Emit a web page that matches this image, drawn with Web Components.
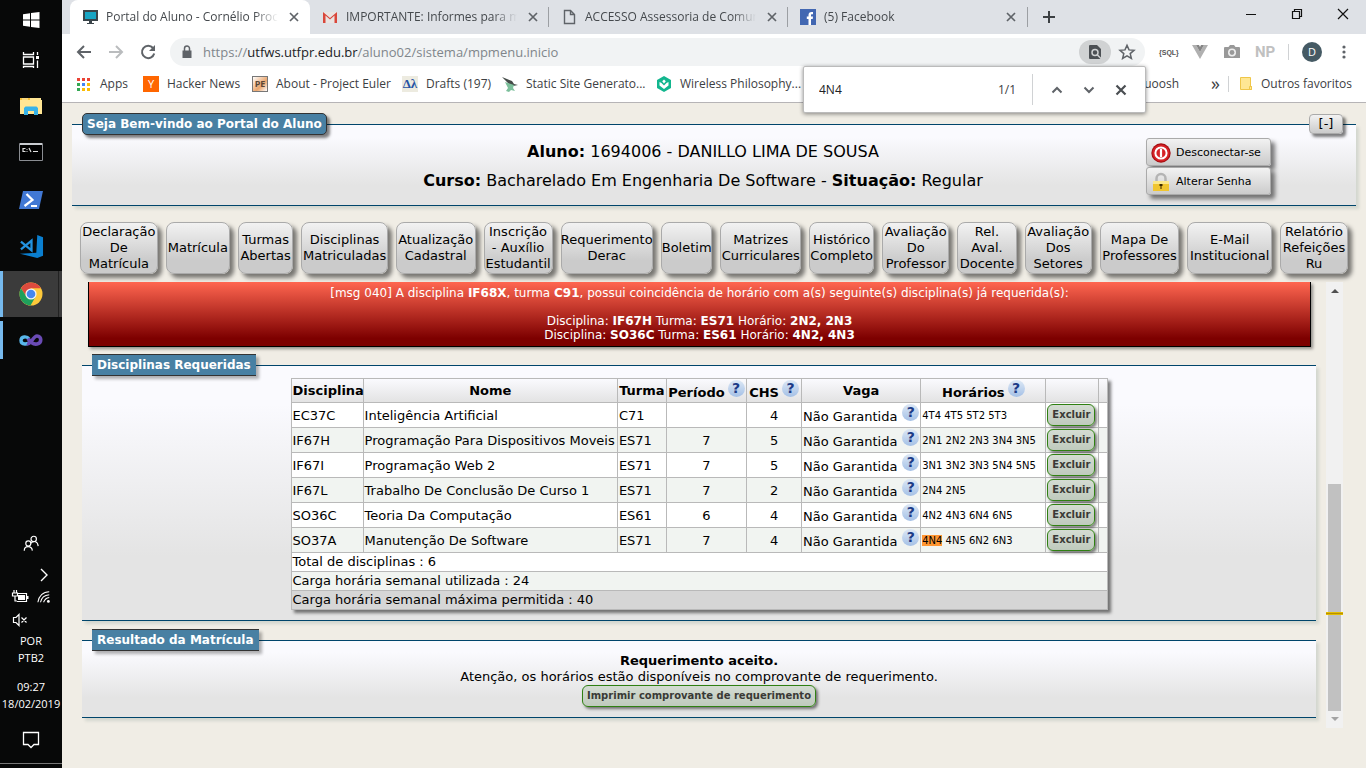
<!DOCTYPE html>
<html lang="pt-BR">
<head>
<meta charset="utf-8">
<title>Portal do Aluno - Cornélio Procópio</title>
<style>
html,body{margin:0;height:100%}
body{font-family:"Open Sans","Noto Sans",sans-serif;font-size:12px;overflow:hidden}
</style>
</head>
<body>
<desktop-shell></desktop-shell>
<script>
const define = (name, css, html, setup) => {
  const tpl = document.createElement('template');
  tpl.innerHTML = `<style>*{box-sizing:border-box}button{font:inherit;color:inherit;cursor:pointer}svg{display:block}${css}</style>${html}`;
  customElements.define(name, class extends HTMLElement {
    constructor() {
      super();
      this.attachShadow({mode: 'open'}).append(tpl.content.cloneNode(true));
    }
    connectedCallback() { if (setup) setup(this, this.shadowRoot); }
  });
};

/* ---------- Icons ---------- */
const ICONS = {
  windows: ['24', '<path fill="#fff" d="M4 6.300l7-1v6.200H4zM12 5.100l8.500-1.200v7.600H12zM4 12.500h7v6.200l-7-1zM12 12.500h8.500v7.600L12 18.900z"/>'],
  taskview: ['24', '<path fill="none" stroke="#fff" stroke-width="1.300" d="M4.500 4v2.500h10V4M4.500 9h10v7h-10zM4.500 20v-1.500h10V20M18.500 4v3M18.500 12.500V20"/><path fill="#fff" d="M17 8h3v3h-3z"/>'],
  folder: ['24', '<path fill="#f5c03a" d="M1 4h10v4H1z"/><path fill="#ffe694" d="M1 6h22v14H1z"/><path fill="#ffe694" d="M11 4h11v3H11z"/><path fill="#fff3c0" d="M3 4.500h6v1H3z"/><path fill="#36b2e8" d="M5 21v-7l1.500-1.500h11L19 14v7h-4v-4H9v4z"/>'],
  cmd: ['24', '<path fill="#000" stroke="#8a8d92" d="M.5 3.500h23v17H.5z"/><path fill="#c9ccd0" d="M1 3h22v2H1z"/><path fill="none" stroke="#ddd" stroke-width="1.200" d="M6.500 8.500H4v3h2.500M8 9v.8M8 11v.8M10 8l2 4M14 11.500h5"/>'],
  powershell: ['24', '<path fill="#4178d4" d="M4 3h20l-4 18H0z"/><path fill="none" stroke="#fff" stroke-width="2.200" d="M7.500 6l6 6-8 6M12 18h6"/>'],
  vscode: ['26', '<path fill="#0a7fd0" d="M19 1l6 2.500v19L19 25 1 20.500l17-1z"/><path fill="none" stroke="#2392df" stroke-width="2.400" d="M2 8l11 9V7L2 16"/>'],
  chrome: ['24', '<circle cx="12" cy="12" r="11.500" fill="#fdc93a"/><path fill="#dd4b3e" d="M2 6.200A11.500 11.500 0 0 1 22 6.300H12L7 14z"/><path fill="#1fa05c" d="M2 6.200A11.500 11.500 0 0 0 11.500 23.500l5-8.700L12 17l-5-3z"/><circle cx="12" cy="12" r="5.600" fill="#f4f4f4"/><circle cx="12" cy="12" r="4.300" fill="#4587ee"/>'],
  vs: ['24', '<path fill="none" stroke="#58b6ea" stroke-width="3.400" d="M12 13C9 17 2 17 2 12.500S8 8 10 11"/><path fill="none" stroke="#6a4bb5" stroke-width="3.600" d="M9 10.500c3 5 6 6 9 5.500 5-1 5-8 0-8-4 0-6 9-10 7.500"/>'],
  people: ['20', '<g fill="none" stroke="#fff" stroke-width="1.300"><circle cx="13" cy="5.500" r="3"/><path d="M9.500 10.500c4-4 8-2 8.500 3"/><circle cx="7" cy="10.500" r="2.800"/><path d="M2.500 18.500c0-6 8.500-6 9 0"/></g>'],
  chevron: ['14', '<path fill="none" stroke="#fff" stroke-width="1.400" d="M4 1l6 6-6 6"/>'],
  battery: ['18', '<path fill="none" stroke="#fff" stroke-width="1.200" d="M6 5.500h9.500v8H6M3 2v3M5.500 2v3M1.500 5h5v3h-5zM4 8v5h2"/><path fill="#fff" d="M7 7h7v5H7zM16 8h1.500v3H16z"/>'],
  wifi: ['16', '<g fill="none" stroke="#fff" stroke-width="1.200"><path d="M1 14C2 7 7 2 14 2M4 14c1-5 5-8 10-8.500M7.500 14c1-3 3-5 6.500-5.500"/></g><circle cx="13" cy="13" r="1.600" fill="#fff"/>'],
  mute: ['16', '<path fill="none" stroke="#fff" stroke-width="1.200" d="M1.500 5.500H4l3-3v11l-3-3H1.500zM9.500 5.500l5 5M14.500 5.500l-5 5"/>'],
  notes: ['20', '<path fill="none" stroke="#fff" stroke-width="1.300" d="M2.500 3.500h15v12H13l-3 3-3-3H2.500z"/>'],
  monitor: ['16', '<path fill="#3a4449" d="M1 1h15v11H1z"/><path fill="#18a5c4" d="M3 3h11v7H3z"/><path fill="#3a4449" d="M7 12h3v2h2v1H5v-1h2z"/>'],
  gmail: ['16', '<path fill="#e9e4e2" d="M1 3h14v11H1z"/><path fill="#d9463a" d="M1 3l7 6 7-6v11h-2.500V6.500L8 10.500 3.500 6.500V14H1z"/>'],
  page: ['16', '<path fill="none" stroke="#5f6368" stroke-width="1.400" d="M3.500 1.500h6l4 4v9h-10zM9.500 1.500v4h4"/>'],
  facebook: ['16', '<path fill="#4267b2" d="M0 0h16v16H0z"/><path fill="#fff" d="M8.500 16v-6H6.800V7.600h1.700V6c0-2 1.200-3 3-3H13v2.200h-1c-.8 0-1 .4-1 1v1.400h2L12.700 10H11v6z"/>'],
  x: ['16', '<path stroke="#5f6368" stroke-width="1.700" d="M4 4l8 8M12 4l-8 8"/>'],
  plus: ['16', '<path stroke="#3c4043" stroke-width="2" d="M8 2v12M2 8h12"/>'],
  min: ['16', '<path stroke="#111" d="M3 8.500h10"/>'],
  restore: ['16', '<path fill="none" stroke="#111" stroke-width="1.200" d="M3.500 5.500h7v7h-7zM5.500 5V3.500h7v7H11"/>'],
  winx: ['16', '<path stroke="#111" stroke-width="1.200" d="M3 3l10 10M13 3L3 13"/>'],
  back: ['18', '<path fill="none" stroke="#5f6368" stroke-width="2" d="M16 9H3M9 3L3 9l6 6"/>'],
  forward: ['18', '<path fill="none" stroke="#babcbe" stroke-width="2" d="M2 9h13M9 3l6 6-6 6"/>'],
  reload: ['18', '<path fill="none" stroke="#5f6368" stroke-width="2" d="M14 5a6.200 6.200 0 1 0 1.200 5.500"/><path fill="#5f6368" d="M16 2v6h-6z"/>'],
  lock: ['16', '<path fill="#5f6368" d="M3.500 6.500h9v7.500h-9z"/><path fill="none" stroke="#5f6368" stroke-width="1.500" d="M5.500 7V4.500a2.500 2.500 0 0 1 5 0V7"/>'],
  findpage: ['18', '<path fill="#4c5054" d="M4 2h7l4 4v10H4a1 1 0 0 1-1-1V3a1 1 0 0 1 1-1z"/><circle cx="9" cy="9.500" r="3" fill="none" stroke="#d0d2d3" stroke-width="1.500"/><path stroke="#d0d2d3" stroke-width="1.500" d="M11 11.500l4.500 4.500"/>'],
  star: ['18', '<path fill="none" stroke="#5f6368" stroke-width="1.500" d="M9 2.300l2 4.600 5 .4-3.800 3.300 1.200 4.900L9 12.900l-4.400 2.600 1.200-4.900L2 7.300l5-.4z"/>'],
  vue: ['18', '<path fill="#b0b0b0" d="M1 2h4l4 7 4-7h4L9 16z"/><path fill="#858585" d="M5 2h3l1 2 1-2h3L9 9z"/>'],
  camera: ['18', '<path fill="#999" d="M5.500 4L7 2h4l1.500 2H16a1 1 0 0 1 1 1v10H1V5a1 1 0 0 1 1-1z"/><circle cx="9" cy="9.500" r="4" fill="#eee"/><circle cx="9" cy="9.500" r="2.400" fill="#999"/>'],
  dots: ['16', '<g fill="#5f6368"><circle cx="8" cy="3" r="1.600"/><circle cx="8" cy="8" r="1.600"/><circle cx="8" cy="13" r="1.600"/></g>'],
  apps: ['16', '<path fill="#ea4335" d="M1 2h3v3H1zM6 2h3v3H6zM11 2h3v3h-3z"/><path fill="#34a853" d="M1 7h3v3H1zM1 12h3v3H1z"/><path fill="#4285f4" d="M6 7h3v3H6z"/><path fill="#fbbc05" d="M11 7h3v3h-3zM6 12h3v3H6zM11 12h3v3h-3z"/>'],
  hummingbird: ['16', '<path fill="#444b48" d="M0 1l10 4 2 3 4 1-5 1-4-2z"/><path fill="#7cbf9b" d="M3 6l9 3-1 3 2 3-4-1-2 2-3-1 2-3z"/>'],
  hexagon: ['16', '<path fill="#12b68e" d="M8 0l7 4v8l-7 4-7-4V4z"/><path fill="#fff" d="M3.500 6l2 1L8 9.500 10.500 7l2-1v3.500L8 13 3.500 9.500zM8 3.500l1.800 1.800L8 7.500 6.200 5.300z"/>'],
  bfolder: ['14', '<path fill="#ffe793" stroke="#efc648" d="M1.500.500h10v9h1v3h-11z"/><path fill="#ffe793" stroke="#efc648" d="M10.500 9.500h2v3h-2z"/>'],
  up: ['16', '<path fill="none" stroke="#5f6368" stroke-width="2" d="M3.500 10.500L8 6l4.500 4.500"/>'],
  down: ['16', '<path fill="none" stroke="#5f6368" stroke-width="2" d="M3.500 5.500L8 10l4.500-4.500"/>'],
  bigx: ['16', '<path stroke="#4a4e52" stroke-width="2.200" d="M3.500 3.500l9 9M12.500 3.500l-9 9"/>'],
  power: ['20', '<circle cx="10" cy="10" r="9.700" fill="#a50e12"/><circle cx="10" cy="10" r="8.600" fill="#d62226"/><circle cx="10" cy="10" r="5.600" fill="none" stroke="#fff" stroke-width="2"/><path stroke="#fff" stroke-width="2.200" d="M10 6v8"/>'],
  padlock: ['20', '<path fill="none" stroke="#b4b4b4" stroke-width="2.500" d="M5.500 10V6.500a4.500 4.500 0 0 1 9 0V10"/><path fill="#f0c52e" d="M2 9h16v10H2z"/><path fill="#fbe88a" d="M2 9h16v3H2z"/><path fill="#3b2b00" d="M8.500 12h3v2h-1v3h-1v-3h-1z"/>']
};
define('ui-icon', ':host{display:block;flex:none}', '', (el, root) => {
  const [box, art] = ICONS[el.getAttribute('name')];
  const size = el.getAttribute('size') || box;
  root.innerHTML += `<svg width="${size}" height="${size}" viewBox="0 0 ${box} ${box}" aria-hidden="true">${art}</svg>`;
});

/* ---------- Windows taskbar ---------- */
define('task-bar', `
:host{display:flex;flex-direction:column;align-items:center;background:#070808;color:#fff;font-size:11px;line-height:17px;text-align:center;border-bottom:4px solid #070808}
button{width:100%;height:46px;display:flex;align-items:center;justify-content:center;background:none;border:0;padding:0}
.s{height:40px}.gap{margin-top:3px}.gap2{margin-top:2px}
.on{background:linear-gradient(90deg,#76b9ed 3px,#3b3b3b 3px 58px,#222 58px 59px,#3b3b3b 59px)}
.run{border-left:3px solid #76b9ed;padding-right:3px;height:38px;margin-top:4px}
.grow{flex:1}
.tray{display:grid;grid-template-columns:auto auto;gap:6px 8px;justify-items:center;align-items:center;margin-bottom:4px}
.tray ui-icon:nth-child(1){grid-column:1/3;margin-bottom:10px}
.tray ui-icon:nth-child(2){grid-column:2}
.clock{margin-top:12px}
.notes{height:46px;margin:4px 0 1px}
.line{width:100%;height:1px;background:#777}`,
`<button class="s" aria-label="Iniciar"><ui-icon name="windows"></ui-icon></button>
<button class="s" aria-label="Visão de tarefas"><ui-icon name="taskview"></ui-icon></button>
<button class="gap" aria-label="Explorador"><ui-icon name="folder"></ui-icon></button>
<button aria-label="Prompt"><ui-icon name="cmd"></ui-icon></button>
<button class="gap2" aria-label="PowerShell"><ui-icon name="powershell"></ui-icon></button>
<button aria-label="Code"><ui-icon name="vscode" size="25"></ui-icon></button>
<button class="on gap2" aria-label="Chrome"><ui-icon name="chrome"></ui-icon></button>
<button class="run" aria-label="Visual Studio"><ui-icon name="vs"></ui-icon></button>
<div class="grow"></div>
<div class="tray"><ui-icon name="people" size="18"></ui-icon><ui-icon name="chevron"></ui-icon><ui-icon name="battery"></ui-icon><ui-icon name="wifi" size="14"></ui-icon><ui-icon name="mute"></ui-icon></div>
<div>POR<br>PTB2</div><div class="clock">09:27<br>18/02/2019</div>
<button class="notes" aria-label="Notificações"><ui-icon name="notes"></ui-icon></button><div class="line"></div>`);

/* ---------- Browser chrome ---------- */
define('browser-tab', `
:host{display:flex;align-items:center;gap:8px;width:239px;height:34px;padding:0 8px 0 12px;color:#45494d;line-height:18px;position:relative}
:host([active]){width:240px;background:#fff;border-radius:8px 8px 0 0}
:host(:not([active]):not([first]))::before{content:"";position:absolute;left:-1px;top:7px;height:20px;width:1px;background:#9c9fa3}
.t{flex:1;overflow:hidden;white-space:nowrap;-webkit-mask:linear-gradient(90deg,#000 calc(100% - 24px),transparent)}
button{border:0;background:none;padding:0}`,
`<slot name="icon"></slot><span class="t"><slot></slot></span><button aria-label="Fechar guia"><ui-icon name="x"></ui-icon></button>`);

define('tab-strip', `
:host{display:flex;background:#dee1e6;height:34px;padding-left:8px;align-items:center}
.new{border:0;border-left:1px solid #9c9fa3;background:none;height:20px;padding:0 14px 0 13px;display:flex;align-items:center}
.g{flex:1}.w{border:0;background:none;padding:0;width:46px;height:28px;display:grid;place-items:center;align-self:start}`,
`<browser-tab active><ui-icon slot="icon" name="monitor"></ui-icon>Portal do Aluno - Cornélio Procópio</browser-tab>
<browser-tab first><ui-icon slot="icon" name="gmail"></ui-icon>IMPORTANTE: Informes para matrícula</browser-tab>
<browser-tab><ui-icon slot="icon" name="page"></ui-icon>ACCESSO Assessoria de Comunicação</browser-tab>
<browser-tab><ui-icon slot="icon" name="facebook"></ui-icon>(5) Facebook</browser-tab>
<button class="new" aria-label="Nova guia"><ui-icon name="plus"></ui-icon></button><span class="g"></span>
<button class="w" aria-label="Minimizar"><ui-icon name="min"></ui-icon></button><button class="w" aria-label="Restaurar"><ui-icon name="restore"></ui-icon></button><button class="w" aria-label="Fechar"><ui-icon name="winx"></ui-icon></button>`);

define('tool-bar', `
:host{display:flex;align-items:center;height:36px;background:#fff;padding:0 14px 0 13px}
button{border:0;background:none;padding:0;display:grid;place-items:center}
.n{width:18px;margin-right:14px}
.omni{flex:1;display:flex;align-items:center;height:28px;border-radius:14px;background:#f1f3f4;padding:0 9px 0 9px;margin-left:-1px}
.url{flex:1;margin-left:8px;font-size:13px;line-height:20px;color:#80868b}.url b{font-weight:400;color:#202124}
.chip{width:32px;height:24px;border-radius:12px;background:#d0d2d3;margin-right:7px}
.ext{display:flex;align-items:center;margin-left:14px;gap:14px}
.ext button{width:18px;height:18px}
.sql{font:700 7px "Liberation Sans",sans-serif;color:#555}.np{font:700 15px "Roboto",sans-serif;color:#c0c0c0}
.sep{width:1px;height:16px;background:#d0d2d4;margin:0 0 0 1px}
.ava{width:20px;height:20px;border-radius:50%;background:#455a64;color:#fff;font-size:11px;line-height:20px;margin:0 14px 0 13px}`,
`<button class="n" aria-label="Voltar"><ui-icon name="back"></ui-icon></button><button class="n" aria-label="Avançar"><ui-icon name="forward"></ui-icon></button><button class="n" aria-label="Recarregar"><ui-icon name="reload"></ui-icon></button>
<div class="omni"><ui-icon name="lock"></ui-icon><span class="url">https://<b>utfws.utfpr.edu.br</b>/aluno02/sistema/mpmenu.inicio</span><button class="chip" aria-label="Localizar"><ui-icon name="findpage"></ui-icon></button><button aria-label="Favorito"><ui-icon name="star"></ui-icon></button></div>
<div class="ext"><button class="sql">{SQL}</button><button aria-label="Vue"><ui-icon name="vue"></ui-icon></button><button aria-label="Câmera"><ui-icon name="camera"></ui-icon></button><button class="np">NP</button><span class="sep"></span></div>
<button class="ava">D</button><button aria-label="Menu"><ui-icon name="dots"></ui-icon></button>`);

define('book-mark', `
:host{display:block}a{display:flex;align-items:center;gap:8px;color:#3c4043;text-decoration:none;white-space:nowrap;line-height:18px}`,
`<a href="#"><slot name="icon"></slot><slot></slot></a>`);

define('bookmarks-bar', `
:host{display:flex;align-items:center;height:33px;background:#fff;border-bottom:1px solid #b6b4b6;padding:0 14px;color:#3c4043;position:relative;padding-bottom:4px}
.row{display:grid;grid-template-columns:67px 109px 150px 100px 154px auto}
.g{flex:1}.more{border:0;background:none;padding:0;font-size:18px;line-height:20px;margin:0 8px 3px 32px}
.sep{width:1px;height:16px;background:#d0d2d4;margin-right:10px}
.fav{width:16px;height:16px;display:grid;place-items:center;font-size:10px;line-height:14px;color:#fff}
.y{background:#f60;font-size:11px}.pe{border:1px solid #777;background:linear-gradient(135deg,#fff,#eaa56c 60%,#fff);color:#5b4636;font-weight:700;font-size:9px}
.dl{background:#edebe0;color:#2553a5;font:600 13px "Liberation Serif",serif}`,
`<div class="row"><book-mark><ui-icon slot="icon" name="apps"></ui-icon>Apps</book-mark>
<book-mark><span slot="icon" class="fav y">Y</span>Hacker News</book-mark>
<book-mark><span slot="icon" class="fav pe">PE</span>About - Project Euler</book-mark>
<book-mark><span slot="icon" class="fav dl">Δλ</span>Drafts (197)</book-mark>
<book-mark><ui-icon slot="icon" name="hummingbird"></ui-icon>Static Site Generato...</book-mark>
<book-mark><ui-icon slot="icon" name="hexagon"></ui-icon>Wireless Philosophy...</book-mark></div>
<span class="g"></span><book-mark>Squoosh</book-mark><button class="more">»</button><span class="sep"></span><book-mark><ui-icon slot="icon" name="bfolder"></ui-icon>Outros favoritos</book-mark>`);

define('find-bar', `
:host{position:absolute;right:220px;top:66px;width:343px;height:47px;display:flex;align-items:center;background:#fff;border:1px solid #bbb;border-radius:2px;box-shadow:0 1px 4px rgba(0,0,0,.45);padding:0 16px 0 15px;color:#3c4043;z-index:3}
input{flex:1;min-width:0;border:0;padding:0;font:inherit;color:#202124;outline:0}
.n{margin-right:16px}.sep{width:1px;height:31px;background:#d0d2d4;margin-right:16px}
button{border:0;background:none;padding:0;margin-left:16px}.sep + button{margin-left:0}`,
`<input aria-label="Localizar na página" value="4N4"><span class="n">1/1</span><span class="sep"></span><button aria-label="Anterior"><ui-icon name="up"></ui-icon></button><button aria-label="Próxima"><ui-icon name="down"></ui-icon></button><button aria-label="Fechar"><ui-icon name="bigx"></ui-icon></button>`);

/* ---------- Portal ---------- */
define('portal-panel', `
:host{display:block;position:relative;border:solid #00456b;border-width:1px 0;background:linear-gradient(#fafafe 15%,#e4e4e4 75%);box-shadow:3px 3px 3px rgba(0,60,50,.12)}
.leg{position:absolute;left:10px;top:-12px;height:22px;padding:0 5px;line-height:20px;font-weight:700;font-size:12px;color:#fff;background:#4880a3;border:solid #333;border-width:1px 0;box-shadow:3px 3px 3px rgba(0,0,0,.3);margin:0;white-space:nowrap}
:host([round]) .leg{border-width:1px;border-radius:5px;padding:0 4px;box-shadow:3px 3px 3px rgba(0,0,0,.5)}`,
`<h2 class="leg"><slot name="legend"></slot></h2><slot></slot>`);

define('portal-menu', `
:host{display:flex;gap:8px;height:52px}
button{flex:1 1 0;min-width:0;padding:0;font-size:13px;line-height:16px;color:#000;white-space:nowrap;display:flex;align-items:center;justify-content:center;text-align:center;border:1px solid #aaa;border-radius:8px;background:linear-gradient(#f2f2f2,#cbcbcb 75%);box-shadow:4px 4px 4px rgba(0,0,0,.5)}`,
'', (el, root) => {
  const items = [['Declaração|De|Matrícula',78],['Matrícula',64],['Turmas|Abertas',55],['Disciplinas|Matriculadas',87],['Atualização|Cadastral',80],['Inscrição|- Auxílio|Estudantil',69],['Requerimento|Derac',93],['Boletim',51],['Matrizes|Curriculares',81],['Histórico|Completo',65],['Avaliação|Do|Professor',67],['Rel.|Aval.|Docente',59],['Avaliação|Dos|Setores',67],['Mapa De|Professores',80],['E-Mail|Institucional',85],['Relatório|Refeições|Ru',68]];
  for (const [label, share] of items) {
    const b = document.createElement('button');
    b.style.flexGrow = share;
    b.innerHTML = `<span>${label.replaceAll('|', '<br>')}</span>`;
    root.append(b);
  }
});

define('student-header', `
:host{display:block}
portal-panel{height:82px}
.who{padding-top:12px;text-align:center;font-size:16px;line-height:29px;color:#000;margin-right:22px}
.act{position:absolute;right:85px;top:13px;display:grid;gap:1px}
.act button{width:125px;height:28px;display:flex;align-items:center;gap:5px;padding:1px 4px 0;font-size:11px;text-align:left;white-space:nowrap;border:1px solid #aaa;border-radius:3px;background:linear-gradient(#f2f2f2,#cbcbcb);box-shadow:4px 4px 4px rgba(0,0,0,.5)}
.min{position:absolute;right:13px;top:-11px;width:34px;height:20px;padding:0;font-size:13px;line-height:16px;border:1px solid #aaa;border-radius:4px;background:linear-gradient(#f2f2f2,#cbcbcb);box-shadow:3px 3px 3px rgba(0,0,0,.5)}`,
`<portal-panel round><span slot="legend">Seja Bem-vindo ao Portal do Aluno</span>
<div class="who"><b>Aluno:</b> 1694006 - DANILLO LIMA DE SOUSA<br><b>Curso:</b> Bacharelado Em Engenharia De Software - <b>Situação:</b> Regular</div>
<div class="act"><button><ui-icon name="power"></ui-icon>Desconectar-se</button><button><ui-icon name="padlock"></ui-icon>Alterar Senha</button></div>
<button class="min">[-]</button></portal-panel>`);

define('alert-box', `
:host{display:block;background:linear-gradient(#ff6650,#7d0000 88%);border:1px solid #000;border-top:0;box-shadow:2px 2px 3px rgba(0,0,0,.4);color:#fff;text-align:center;font-size:12px;line-height:14px;padding:4px 0 4px}
p{margin:0 0 14px}`,
`<p>[msg 040] A disciplina <b>IF68X</b>, turma <b>C91</b>, possui coincidência de horário com a(s) seguinte(s) disciplina(s) já requerida(s):</p>
Disciplina: <b>IF67H</b> Turma: <b>ES71</b> Horário: <b>2N2, 2N3</b><br>Disciplina: <b>SO36C</b> Turma: <b>ES61</b> Horário: <b>4N2, 4N3</b>`);

define('help-dot', `
:host{display:inline-block;width:17px;height:17px;border-radius:50%;background:linear-gradient(#dde8f5,#a4c0e6);color:#1c3a86;font-weight:700;font-size:14px;line-height:17px;text-align:center;vertical-align:1px}`, `?`);

define('green-button', `
:host{display:inline-block}
button{display:block;height:22px;padding:0 4px;font-weight:700;font-size:10px;line-height:18px;color:#3a3a36;border:1px solid #2f8012;border-radius:6px;background:linear-gradient(#d4dcd2,#bfcabd);box-shadow:2px 2px 3px rgba(0,0,0,.5);white-space:nowrap}`,
`<button><slot></slot></button>`);

define('course-table', `
:host{display:block;padding-top:12px}
table{margin:0 auto;width:817px;table-layout:fixed;border-collapse:collapse;font-size:13px;line-height:16px;color:#000;box-shadow:3px 3px 3px rgba(0,0,0,.5);background:#fff}
td,th{border:1px solid #b9b9b9;padding:0 1px;white-space:nowrap}
tbody tr{height:25px}thead tr{height:24px}tfoot tr{height:19px}
tbody td{padding:1px 1px 0 1px}
thead{background:linear-gradient(#fafafe,#e2e2e2)}
tbody tr:nth-child(even),tfoot tr:nth-child(2){background:#f1f4f1}
tfoot tr:nth-child(3){background:#d6d6d6}
.c{text-align:center}tbody .h{font-size:10px}
tbody .b{padding-top:0}
tbody .v{padding-top:0;line-height:20px}
.v help-dot,.q help-dot{vertical-align:0}
.v span,.q span{display:inline-flex;gap:5px;align-items:flex-end;line-height:16px}
.q span{gap:3px}
.v help-dot,.q help-dot{margin-bottom:4px}
.v span,.q span{height:21px}
mark{background:#ff9632;color:#000}`,
`<table><colgroup><col style="width:72px"><col style="width:254px"><col style="width:49px"><col style="width:80px"><col style="width:55px"><col style="width:119px"><col style="width:125px"><col style="width:53px"><col style="width:8px"></colgroup>
<thead><tr><th>Disciplina<th>Nome<th>Turma<th class="q"><span>Período <help-dot></help-dot></span><th class="q"><span>CHS <help-dot></help-dot></span><th>Vaga<th class="q"><span>Horários <help-dot></help-dot></span><th><th></tr></thead><tbody></tbody>
<tfoot><tr><td colspan="9">Total de disciplinas : 6</tr><tr><td colspan="9">Carga horária semanal utilizada : 24</tr><tr><td colspan="9">Carga horária semanal máxima permitida : 40</tr></tfoot></table>`,
(el, root) => {
  const rows = [['EC37C','Inteligência Artificial','C71','','4','4T4 4T5 5T2 5T3'],['IF67H','Programação Para Dispositivos Moveis','ES71','7','5','2N1 2N2 2N3 3N4 3N5'],['IF67I','Programação Web 2','ES71','7','5','3N1 3N2 3N3 5N4 5N5'],['IF67L','Trabalho De Conclusão De Curso 1','ES71','7','2','2N4 2N5'],['SO36C','Teoria Da Computação','ES61','6','4','4N2 4N3 6N4 6N5'],['SO37A','Manutenção De Software','ES71','7','4','<mark>4N4</mark> 4N5 6N2 6N3']];
  root.querySelector('tbody').innerHTML = rows.map(r => `<tr><td>${r[0]}<td>${r[1]}<td>${r[2]}<td class="c">${r[3]}<td class="c">${r[4]}<td class="v"><span>Não Garantida <help-dot></help-dot></span><td class="h">${r[5]}<td class="b"><green-button>Excluir</green-button><td></tr>`).join('');
});

define('scroll-track', `
:host{display:flex;flex-direction:column;width:17px;background:#f1f1f1;position:relative;align-items:center}
i{width:0;height:0;border:4px solid transparent;margin:4px 0 6px;border-top-width:3px}
.u{border-bottom:4px solid #505050}.d{border-top:4px solid #a3a3a3;border-bottom-width:3px;margin:6px 0 4px}
.s{flex:185}.t{flex:227;width:13px;background:#c1c1c1}
.m{position:absolute;left:0;right:0;top:74%;height:3px;background:#b89000;border:solid #e3bd00;border-width:1px 0}`,
`<i class="u"></i><span class="s"></span><span class="t"></span><i class="d"></i><span class="m"></span>`);

define('portal-page', `
:host{display:flex;flex-direction:column;background:#f0ede5;padding:21px 10px 40px;font-family:"DejaVu Sans",Verdana,sans-serif;min-height:0}
portal-menu{margin:16px 8px 0}
.area{flex:1;min-height:0;display:flex;gap:10px;margin:8px 13px 0 10px}
.body{flex:1;overflow:hidden;padding-right:8px;margin-right:-8px}
alert-box{margin:0 5px 0 6px}
.req{margin-top:18px;height:256px}
.res{margin-top:19px;height:78px;text-align:center;font-size:13px;line-height:16px;padding-top:12px;box-sizing:border-box}`,
`<student-header></student-header><portal-menu></portal-menu>
<div class="area"><div class="body"><alert-box></alert-box>
<portal-panel class="req"><span slot="legend">Disciplinas Requeridas</span><course-table></course-table></portal-panel>
<portal-panel class="res"><span slot="legend">Resultado da Matrícula</span><b>Requerimento aceito.</b><br>Atenção, os horários estão disponíveis no comprovante de requerimento.<br><green-button>Imprimir comprovante de requerimento</green-button></portal-panel>
</div><scroll-track></scroll-track></div>`);

define('browser-window', `
:host{display:flex;flex-direction:column;position:relative;min-width:0}portal-page{flex:1}`,
`<tab-strip></tab-strip><tool-bar></tool-bar><bookmarks-bar></bookmarks-bar><find-bar></find-bar><portal-page></portal-page>`);

define('desktop-shell', `:host{display:grid;grid-template-columns:62px 1fr;height:100vh}`, `<task-bar></task-bar><browser-window></browser-window>`);
</script>
</body>
</html>
